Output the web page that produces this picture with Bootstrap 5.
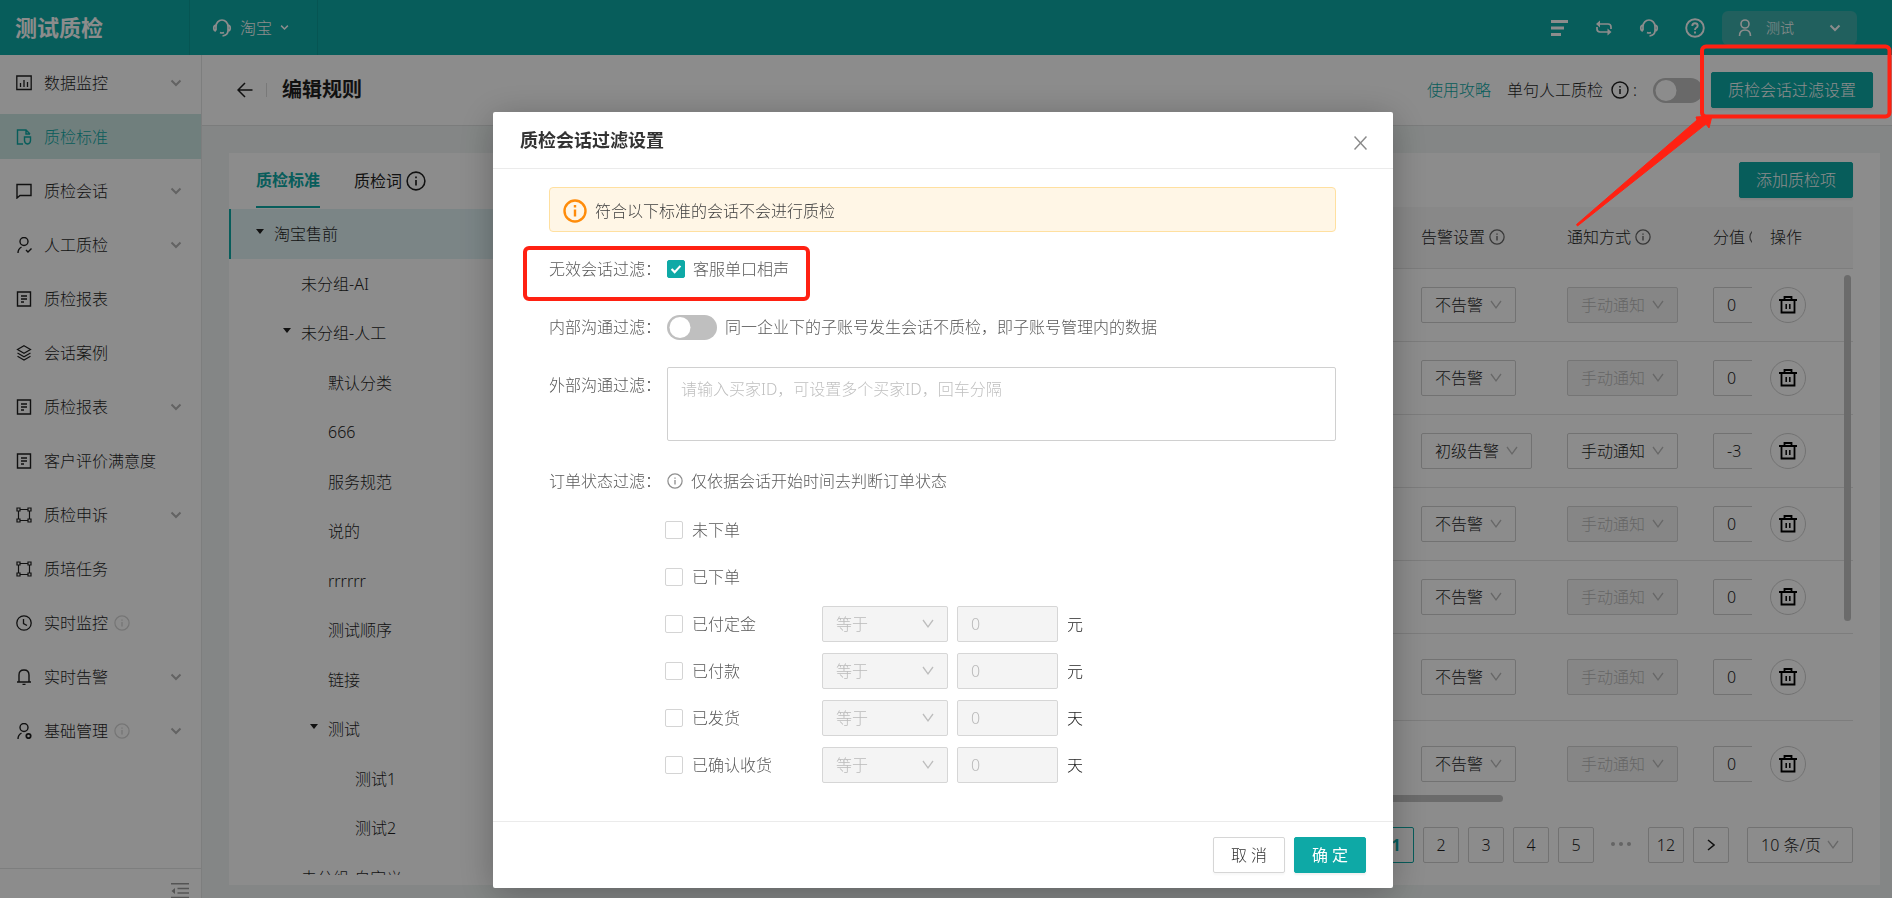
<!DOCTYPE html>
<html lang="zh-CN">
<head>
<meta charset="utf-8">
<meta name="viewport" content="width=device-width, initial-scale=1">
<title>测试质检</title>
<link rel="stylesheet" href="https://cdn.jsdelivr.net/npm/bootstrap@5.3.0/dist/css/bootstrap.min.css">
<style>
:root{--teal:#0ea9a6;--line:#e4e6e6;--ink:#1f1f1f;--chev:url("data:image/svg+xml,%3Csvg xmlns='http://www.w3.org/2000/svg' viewBox='0 0 12 10' fill='none' stroke='%23bdbdbd' stroke-width='1.3'%3E%3Cpath d='M1 1l5 7 5-7'/%3E%3C/svg%3E")}
body{font-family:"Noto Sans","Noto Sans CJK SC",sans-serif;font-size:16px;font-weight:300;line-height:24px;color:var(--ink);background:#f0f5f4}
svg{fill:none;stroke:currentColor;flex:none;display:block}
a{text-decoration:none;color:inherit}
.i16{width:16px;height:16px}.i18{width:18px;height:18px}.i20{width:20px;height:20px}.i24{width:24px;height:24px}
.text-teal{color:var(--teal)}

.topbar{height:55px;background:var(--teal);color:#fff}
.brandcell{width:190px;padding-left:15px;border-right:1px solid #0b9b98;font-size:22px;font-weight:700;padding-bottom:2px}
.shopcell{width:128px;padding-left:22px;border-right:1px solid #0b9b98}
.tools{gap:26px;margin-right:17px}
.userbox{width:135px;height:34px;border-radius:6px;background:#3cb0ac;padding:0 16px;gap:14px;font-size:14px;margin-right:35px;color:#fff;border:0;font-weight:300}

.side{width:202px;border-right:1px solid var(--line)}
.side .nav{padding-top:5px}
.side .nav-link{height:45px;margin-bottom:9px;padding:0 19px 0 16px;gap:12px;color:var(--ink)}
.side .nav-link.active{background:#cde7e3;color:var(--teal)}
.side .tip{color:#d6d6d6;margin-left:-6px}
.side .arrow{color:#b4b4b4;margin-left:auto}
.sidefoot{height:30px;border-top:1px solid var(--line);padding:14px 12px 0 0;color:#999}

.pagehead{height:71px;border-bottom:1px solid #e0e2e2;padding:0 19px 0 35px}
.pagetitle{font-size:20px;font-weight:700;line-height:24px;padding-left:15px}
.headline{width:1px;height:14px;background:#dcdcdc;margin-left:13px}
.btn-teal{--bs-btn-bg:var(--teal);--bs-btn-border-color:var(--teal);--bs-btn-color:#fff;--bs-btn-hover-bg:#0c9794;--bs-btn-hover-color:#fff;box-shadow:0 2px 2px rgba(0,0,0,.06)}
.btn{height:36px;padding:0 16px;border-radius:2px;line-height:24px;font-weight:inherit}
.workarea{padding:27px 12px 13px 27px}
.tree{width:400px}
.tabrow{height:55px;padding-left:27px;gap:34px}
.tabrow a.on{color:var(--teal);font-weight:700;height:55px;border-bottom:2px solid var(--teal);line-height:54px}
.tabrow a{height:55px;line-height:54px}
.tabrow a.word{font-weight:400}
.tree li{height:50px;display:flex;align-items:center;padding-left:72px}
.tree li:nth-child(even){height:49px}
.tree li.sel{background:#e1f3f5;border-left:2px solid var(--teal);padding-left:25px}
.tree li.lv3{padding-left:99px}.tree li.lv4{padding-left:126px}
.tree li.open::before,.tree li.sel::before{content:"";border:4px solid transparent;border-top:5px solid #1f1f1f;border-bottom:0;margin:0 10px 6px 0}
.tree li.open{padding-left:54px}.tree li.lv3.open{padding-left:81px}
.treebox{margin-bottom:10px;padding-top:1px}

.rulepane{padding:9px 27px 22px 0}
.rules{table-layout:fixed;--bs-table-bg:transparent;margin:0;color:inherit}
.rules th,.rules td{padding:0 0 0 18px;height:73px;vertical-align:middle;white-space:nowrap;overflow:hidden;border-color:#e3e3e3}
.rules th{height:61px;font-weight:inherit;background:#f7f7f7}
.rules th svg{color:#666}
.rules tr.tall td{height:87px}
.rules .ops{position:relative;overflow:visible;background:#fff;box-shadow:-7px 0 8px -5px rgba(0,0,0,.16)}
.rules th.ops{background:#f7f7f7}
.rules .form-control{width:90px}
.form-select{width:95px;height:36px;padding:0 0 0 13px;border-radius:2px;border-color:#d0d0d0;background-image:var(--chev);background-size:12px 10px;background-position:right 13px center;font-weight:inherit;color:inherit;line-height:24px}
.form-select.wide{width:111px}
.form-control{height:36px;padding:0 13px;border-radius:2px;border-color:#d0d0d0;font-weight:inherit;color:inherit}
.form-select:disabled,.form-control:disabled{background-color:#f4f4f4;color:#bababa;border-color:#d6d6d6;opacity:1}
.trash{width:36px;height:36px;border:1px solid #d0d0d0;border-radius:50%;background:#fff;padding:0}
.vbar{width:7px;height:346px;border-radius:4px;background:#c4c4c4;top:68px;right:2px}
.hbar{height:7px;width:874px;border-radius:4px;background:#c4c4c4;margin-top:2px}
.scroller{margin-top:9px}
.pager{gap:9px;padding-top:25px}
.pager .page-link{width:36px;height:36px;padding:0;line-height:34px;border:1px solid #d0d0d0;border-radius:2px;text-align:center;color:inherit;background:none}
.pager .page-link.on{border-color:var(--teal);color:var(--teal);font-weight:700}
.pager .form-select{width:106px;margin-left:9px}

.modal-backdrop{--bs-backdrop-opacity:.45}
.modal{padding-right:6px}
.modal-dialog{max-width:900px;margin-top:112px}
.modal-content{border:0;border-radius:2px;box-shadow:0 6px 36px rgba(0,0,0,.28);color:#595959}
.modal-header{height:57px;padding:0 26px 0 27px;border-color:#ebebeb;border-radius:0}
.modal-title{font-size:18px;font-weight:700;color:#333}
.modal-header button{color:#8a8a8a;background:none;border:0;padding:0;margin-top:6px}
.modal-body{padding:18px 57px 33px 56px}
.modal-body .alert{height:45px;padding:2px 13px 0;gap:8px;background:#fff6e6;border-color:#ffe0a0;border-radius:4px;margin-bottom:19px;color:#404040}
.alert svg{color:#ff8c0a}
.frow{min-height:36px;margin-bottom:22px}
.frow .flabel{width:118px;line-height:36px;flex:none}
.frow .note{color:#8f8f8f}
.frow textarea.form-control{height:74px;padding:9px 13px;resize:none}
textarea::placeholder{color:#bfbfbf!important}
.form-check-input{width:18px;height:18px;margin:0;border-color:#d4d4d4;float:none;flex:none}
.form-check-input[type=checkbox]{border-radius:2px}
.form-check-input:checked{background-color:var(--teal);border-color:var(--teal);background-image:url("data:image/svg+xml,%3Csvg xmlns='http://www.w3.org/2000/svg' viewBox='0 0 18 18' fill='none' stroke='white' stroke-width='2.4'%3E%3Cpath d='M4 9l3.5 3.5L14 5.5'/%3E%3C/svg%3E")}
.form-check-input.toggle[type=checkbox]{width:50px;height:25px;border:0;border-radius:13px;background:#bfbfbf url("data:image/svg+xml,%3Csvg xmlns='http://www.w3.org/2000/svg' viewBox='0 0 50 25'%3E%3Ccircle cx='13' cy='12.5' r='10.5' fill='white'/%3E%3C/svg%3E") center/50px 25px no-repeat}
.states{margin-top:-15px}
.state{height:47px;padding-left:116px}
.state label{margin-left:9px;width:130px}
.state .form-select{width:126px}
.state .form-control{width:101px;margin:0 9px}
.state .unit{color:var(--ink)}
.modal-footer{padding:15px 27px;gap:9px;border-color:#ebebeb}
.modal-footer>*{margin:0}
.modal-footer .btn{width:72px;padding:0;font-size:16px}
.modal-footer .btn-teal{font-weight:400}
.btn-plain{--bs-btn-border-color:#d6d6d6;--bs-btn-color:#333;box-shadow:0 2px 2px rgba(0,0,0,.03)}
.callout{position:absolute;left:-26px;top:-5px;width:287px;height:55px;border:4px solid #ff2112;border-radius:6px;pointer-events:none}
.pointer{position:fixed;top:0;right:0;width:332px;height:240px;z-index:1100;pointer-events:none;color:#ff2112}
</style>
</head>
<body class="vh-100 overflow-hidden d-flex flex-column">
<svg class="d-none" stroke-linecap="square">
  <symbol id="info" viewBox="0 0 18 18"><circle cx="9" cy="9" r="8" stroke-width="1.4"/><path d="M9 8v5M9 5v1.500" stroke-width="1.5" stroke-linecap="butt"/></symbol>
  <symbol id="down" viewBox="0 0 12 12"><path d="M1.5 3.5L6 8l4.500-4.500" stroke-width="2"/></symbol>
  <symbol id="head" viewBox="0 0 20 20"><path d="M4 12.500V8.500a6 6.500 0 0 1 12 0v4c0 3-2 5-5.500 5.500M4 7C1 7.500 1 12.500 4 13M16 7c3 .5 3 5.500 0 6M8 14.500q2 1 4 0" stroke-width="1.700"/></symbol>
  <symbol id="report" viewBox="0 0 16 16"><path d="M1.500 1h13v14h-13zM5 5h6M5 8h6M5 11h3" stroke-width="1.400"/></symbol>
  <symbol id="nodes" viewBox="0 0 16 16"><path d="M1 1h3v3H1zM12 1h3v3h-3zM1 12h3v3H1zM12 12h3v3h-3zM4 2.500h8M4 13.500h8M2.500 4v8M13.500 4v8" stroke-width="1.200"/></symbol>
  <symbol id="trash" viewBox="0 0 18 18"><path d="M0 4h18M5.500 3.500V1h7v2.500M2.500 4.500v12h13v-12" stroke-width="1.800"/><path d="M7.200 8v5M10.800 8v5" stroke-width="1.500"/></symbol>
</svg>

<header class="topbar d-flex align-items-stretch flex-shrink-0">
  <div class="brandcell d-flex align-items-center">测试质检</div>
  <a href="#" class="shopcell d-flex align-items-center"><svg class="i20"><use href="#head"/></svg><span class="ms-2">淘宝</span><svg width="9" height="9" class="ms-2"><use href="#down"/></svg></a>
  <div class="tools d-flex align-items-center ms-auto">
    <a href="#" aria-label="列表"><svg class="i18" viewBox="0 0 18 18" stroke-width="3"><path d="M0 2.500h17M0 9h13M0 15.500h10"/></svg></a>
    <a href="#" aria-label="切换"><svg class="i18" viewBox="0 0 18 18" stroke-width="1.700"><path d="M3 5h10q3 0 3 3v2M14 13H5q-3 0-3-3V8"/><path d="M5 1.500v7L1 5zM12.500 9.500v7l4-3.500z" fill="currentColor" stroke="none"/></svg></a>
    <a href="#" aria-label="客服"><svg class="i20"><use href="#head"/></svg></a>
    <a href="#" aria-label="帮助"><svg class="i20" viewBox="0 0 20 20" stroke-width="1.900"><circle cx="10" cy="10" r="8.800"/><path d="M7.300 8q0-2.700 2.700-2.700T12.700 7.800Q12.700 9 11 10q-1 .6-1 2M10 13.500v2"/></svg></a>
  </div>
  <button type="button" class="userbox d-flex align-items-center align-self-center"><svg width="14" height="17" viewBox="0 0 14 17" stroke-width="1.600"><circle cx="7" cy="5" r="4"/><path d="M1.500 17q0-6 5.500-6t5.500 6"/></svg><span>测试</span><svg width="12" height="12" class="ms-auto"><use href="#down"/></svg></button>
</header>

<div class="d-flex flex-grow-1 overflow-hidden">
  <aside class="side bg-white d-flex flex-column flex-shrink-0">
    <nav class="nav flex-column flex-nowrap flex-grow-1">
      <a href="#" class="nav-link d-flex align-items-center"><svg class="i16" viewBox="0 0 16 16" stroke-width="1.300"><path d="M.8 1h14.400v13.500H.8zM4.500 8v4M8 5v7M11.500 7v5"/></svg>数据监控<svg width="12" height="12" class="arrow"><use href="#down"/></svg></a>
      <a href="#" class="nav-link active d-flex align-items-center"><svg class="i16" viewBox="0 0 16 16" stroke-width="1.400"><path d="M7 15H1.500V1H10l4 4M10 1v4h4M8.500 8h6v3.500q0 3-3 3.500-3-.5-3-3.500z"/></svg>质检标准</a>
      <a href="#" class="nav-link d-flex align-items-center"><svg class="i16" viewBox="0 0 16 16" stroke-width="1.400"><path d="M1 15V1.500h14v11H4z"/></svg>质检会话<svg width="12" height="12" class="arrow"><use href="#down"/></svg></a>
      <a href="#" class="nav-link d-flex align-items-center"><svg class="i16" viewBox="0 0 16 16" stroke-width="1.400"><circle cx="8" cy="4.500" r="4"/><path d="M2 16q0-4 3.500-6M10 13l2 2 3.500-3.500"/></svg>人工质检<svg width="12" height="12" class="arrow"><use href="#down"/></svg></a>
      <a href="#" class="nav-link d-flex align-items-center"><svg class="i16"><use href="#report"/></svg>质检报表</a>
      <a href="#" class="nav-link d-flex align-items-center"><svg class="i16" viewBox="0 0 16 16" stroke-width="1.200"><path d="M8 .8l6.500 3.700L8 8.200 1.500 4.500zM1.500 8L8 11.700 14.500 8M1.500 11.300L8 15l6.500-3.700"/></svg>会话案例</a>
      <a href="#" class="nav-link d-flex align-items-center"><svg class="i16"><use href="#report"/></svg>质检报表<svg width="12" height="12" class="arrow"><use href="#down"/></svg></a>
      <a href="#" class="nav-link d-flex align-items-center"><svg class="i16"><use href="#report"/></svg>客户评价满意度</a>
      <a href="#" class="nav-link d-flex align-items-center"><svg class="i16"><use href="#nodes"/></svg>质检申诉<svg width="12" height="12" class="arrow"><use href="#down"/></svg></a>
      <a href="#" class="nav-link d-flex align-items-center"><svg class="i16"><use href="#nodes"/></svg>质培任务</a>
      <a href="#" class="nav-link d-flex align-items-center"><svg class="i16" viewBox="0 0 16 16" stroke-width="1.300"><circle cx="8" cy="8" r="7.200"/><path d="M7.500 4v4.500l3.500 2"/></svg>实时监控<svg class="i16 tip"><use href="#info"/></svg></a>
      <a href="#" class="nav-link d-flex align-items-center"><svg class="i16" viewBox="0 0 16 16" stroke-width="1.400"><path d="M1 13h14M3 13V6q0-5 5-5t5 5v7M6.500 15.500h3"/></svg>实时告警<svg width="12" height="12" class="arrow"><use href="#down"/></svg></a>
      <a href="#" class="nav-link d-flex align-items-center"><svg class="i16" viewBox="0 0 16 16" stroke-width="1.400"><circle cx="8" cy="4.500" r="4"/><path d="M2 16q0-4 3.500-6"/><circle cx="12.500" cy="13" r="2.200" stroke-width="1.800"/></svg>基础管理<svg class="i16 tip"><use href="#info"/></svg><svg width="12" height="12" class="arrow"><use href="#down"/></svg></a>
    </nav>
    <div class="sidefoot d-flex justify-content-end flex-shrink-0"><svg width="18" height="16" viewBox="0 0 18 16" stroke-width="1.600"><path d="M0 .8h18M6.500 5.500H18M6.500 10H18M0 14.500h18"/><path d="M4 5v6L.5 8z" fill="currentColor" stroke="none"/></svg></div>
  </aside>

  <main class="flex-grow-1 d-flex flex-column overflow-hidden">
    <div class="pagehead bg-white d-flex align-items-center flex-shrink-0">
      <a href="#" aria-label="返回"><svg class="i16" viewBox="0 0 16 16" stroke-width="1.500"><path d="M15.500 8H1M8 1L1 8l7 7"/></svg></a>
      <span class="headline"></span>
      <h1 class="pagetitle mb-0">编辑规则</h1>
      <a href="#" class="text-teal ms-auto">使用攻略</a>
      <label for="manual" class="d-flex align-items-center ms-3">单句人工质检<svg class="i18 ms-2"><use href="#info"/></svg><span class="ms-1">:</span></label>
      <input type="checkbox" role="switch" id="manual" class="form-check-input toggle ms-3 me-2">
      <button type="button" class="btn btn-teal">质检会话过滤设置</button>
    </div>
    <div class="workarea flex-grow-1 d-flex overflow-hidden">
      <div class="bg-white flex-grow-1 d-flex overflow-hidden">
        <section class="tree d-flex flex-column flex-shrink-0">
          <div class="tabrow d-flex flex-shrink-0"><a href="#" class="on">质检标准</a><a href="#" class="word d-flex align-items-center">质检词<svg class="i20 ms-1"><use href="#info"/></svg></a></div>
          <div class="treebox flex-grow-1 overflow-hidden">
            <ul class="list-unstyled mb-0">
              <li class="sel">淘宝售前</li>
              <li>未分组-AI</li>
              <li class="open">未分组-人工</li>
              <li class="lv3">默认分类</li>
              <li class="lv3">666</li>
              <li class="lv3">服务规范</li>
              <li class="lv3">说的</li>
              <li class="lv3">rrrrrr</li>
              <li class="lv3">测试顺序</li>
              <li class="lv3">链接</li>
              <li class="lv3 open">测试</li>
              <li class="lv4">测试1</li>
              <li class="lv4">测试2</li>
              <li>未分组-自定义</li>
            </ul>
          </div>
        </section>
        <section class="rulepane flex-grow-1 d-flex flex-column overflow-hidden">
          <div class="text-end flex-shrink-0"><button type="button" class="btn btn-teal">添加质检项</button></div>
          <div class="scroller position-relative flex-grow-1 overflow-hidden">
            <table class="table rules">
              <colgroup><col><col style="width:146px"><col style="width:146px"><col style="width:57px"><col style="width:101px"></colgroup>
              <thead><tr><th></th><th><span class="d-flex align-items-center">告警设置<svg class="i16 ms-1"><use href="#info"/></svg></span></th><th><span class="d-flex align-items-center">通知方式<svg class="i16 ms-1"><use href="#info"/></svg></span></th><th><span class="d-flex align-items-center">分值<svg class="i16 ms-1"><use href="#info"/></svg></span></th><th class="ops">操作</th></tr></thead>
              <tbody>
                <tr><td></td><td><select class="form-select" aria-label="告警设置"><option>不告警</option></select></td><td><select class="form-select wide" aria-label="通知方式" disabled><option>手动通知</option></select></td><td><input class="form-control" aria-label="分值" value="0"></td><td class="ops"><button type="button" class="trash d-flex align-items-center justify-content-center" aria-label="删除"><svg class="i18"><use href="#trash"/></svg></button></td></tr>
                <tr><td></td><td><select class="form-select" aria-label="告警设置"><option>不告警</option></select></td><td><select class="form-select wide" aria-label="通知方式" disabled><option>手动通知</option></select></td><td><input class="form-control" aria-label="分值" value="0"></td><td class="ops"><button type="button" class="trash d-flex align-items-center justify-content-center" aria-label="删除"><svg class="i18"><use href="#trash"/></svg></button></td></tr>
                <tr><td></td><td><select class="form-select wide" aria-label="告警设置"><option>初级告警</option></select></td><td><select class="form-select wide" aria-label="通知方式"><option>手动通知</option></select></td><td><input class="form-control" aria-label="分值" value="-3"></td><td class="ops"><button type="button" class="trash d-flex align-items-center justify-content-center" aria-label="删除"><svg class="i18"><use href="#trash"/></svg></button></td></tr>
                <tr><td></td><td><select class="form-select" aria-label="告警设置"><option>不告警</option></select></td><td><select class="form-select wide" aria-label="通知方式" disabled><option>手动通知</option></select></td><td><input class="form-control" aria-label="分值" value="0"></td><td class="ops"><button type="button" class="trash d-flex align-items-center justify-content-center" aria-label="删除"><svg class="i18"><use href="#trash"/></svg></button></td></tr>
                <tr><td></td><td><select class="form-select" aria-label="告警设置"><option>不告警</option></select></td><td><select class="form-select wide" aria-label="通知方式" disabled><option>手动通知</option></select></td><td><input class="form-control" aria-label="分值" value="0"></td><td class="ops"><button type="button" class="trash d-flex align-items-center justify-content-center" aria-label="删除"><svg class="i18"><use href="#trash"/></svg></button></td></tr>
                <tr class="tall"><td></td><td><select class="form-select" aria-label="告警设置"><option>不告警</option></select></td><td><select class="form-select wide" aria-label="通知方式" disabled><option>手动通知</option></select></td><td><input class="form-control" aria-label="分值" value="0"></td><td class="ops"><button type="button" class="trash d-flex align-items-center justify-content-center" aria-label="删除"><svg class="i18"><use href="#trash"/></svg></button></td></tr>
                <tr class="tall"><td></td><td><select class="form-select" aria-label="告警设置"><option>不告警</option></select></td><td><select class="form-select wide" aria-label="通知方式" disabled><option>手动通知</option></select></td><td><input class="form-control" aria-label="分值" value="0"></td><td class="ops"><button type="button" class="trash d-flex align-items-center justify-content-center" aria-label="删除"><svg class="i18"><use href="#trash"/></svg></button></td></tr>
              </tbody>
            </table>
            <div class="vbar position-absolute"></div>
          </div>
          <div class="hbar flex-shrink-0"></div>
          <nav class="pager d-flex justify-content-end align-items-center flex-shrink-0" aria-label="分页">
            <a href="#" class="page-link on">1</a><a href="#" class="page-link">2</a><a href="#" class="page-link">3</a><a href="#" class="page-link">4</a><a href="#" class="page-link">5</a>
            <svg width="36" height="36" viewBox="0 0 36 36"><g fill="#b8b8b8" stroke="none"><circle cx="10" cy="17" r="2"/><circle cx="18" cy="17" r="2"/><circle cx="26" cy="17" r="2"/></g></svg>
            <a href="#" class="page-link">12</a>
            <a href="#" class="page-link d-flex align-items-center justify-content-center" aria-label="下一页"><svg width="8" height="12" viewBox="0 0 8 12" stroke-width="1.500"><path d="M1 1l6 5-6 5"/></svg></a>
            <select class="form-select" aria-label="每页条数"><option>10 条/页</option></select>
          </nav>
        </section>
      </div>
    </div>
  </main>
</div>

<div class="modal-backdrop show"></div>
<div class="modal d-block" role="dialog" aria-modal="true" aria-labelledby="dlgTitle">
  <div class="modal-dialog">
    <div class="modal-content">
      <div class="modal-header">
        <h2 class="modal-title" id="dlgTitle">质检会话过滤设置</h2>
        <button type="button" aria-label="关闭"><svg width="13" height="14" viewBox="0 0 13 14" stroke-width="1.500"><path d="M.5 .5l12 13M12.500 .5l-12 13"/></svg></button>
      </div>
      <form class="modal-body">
        <div class="alert d-flex align-items-center"><svg class="i24" viewBox="0 0 24 24"><circle cx="12" cy="12" r="10.500" stroke-width="2.400"/><path d="M12 10.500v7M12 6v2.400" stroke-width="2.400"/></svg>符合以下标准的会话不会进行质检</div>
        <div class="frow d-flex align-items-center position-relative">
          <span class="flabel">无效会话过滤：</span>
          <input type="checkbox" class="form-check-input" id="solo" checked><label for="solo" class="ms-2">客服单口相声</label>
          <span class="callout"></span>
        </div>
        <div class="frow d-flex align-items-center">
          <span class="flabel">内部沟通过滤：</span>
          <input type="checkbox" role="switch" class="form-check-input toggle" id="inner"><label for="inner" class="ms-2">同一企业下的子账号发生会话不质检，即子账号管理内的数据</label>
        </div>
        <div class="frow d-flex align-items-start">
          <label class="flabel" for="outer">外部沟通过滤：</label>
          <textarea class="form-control" id="outer" placeholder="请输入买家ID，可设置多个买家ID，回车分隔"></textarea>
        </div>
        <div class="frow d-flex align-items-center">
          <span class="flabel">订单状态过滤：</span>
          <svg class="i16 note"><use href="#info"/></svg><span class="ms-2">仅依据会话开始时间去判断订单状态</span>
        </div>
        <div class="states">
          <div class="state d-flex align-items-center"><input type="checkbox" class="form-check-input" id="s1"><label for="s1">未下单</label></div>
          <div class="state d-flex align-items-center"><input type="checkbox" class="form-check-input" id="s2"><label for="s2">已下单</label></div>
          <div class="state d-flex align-items-center"><input type="checkbox" class="form-check-input" id="s3"><label for="s3">已付定金</label><select class="form-select" aria-label="条件" disabled><option>等于</option></select><input class="form-control" aria-label="金额" value="0" disabled><span class="unit">元</span></div>
          <div class="state d-flex align-items-center"><input type="checkbox" class="form-check-input" id="s4"><label for="s4">已付款</label><select class="form-select" aria-label="条件" disabled><option>等于</option></select><input class="form-control" aria-label="金额" value="0" disabled><span class="unit">元</span></div>
          <div class="state d-flex align-items-center"><input type="checkbox" class="form-check-input" id="s5"><label for="s5">已发货</label><select class="form-select" aria-label="条件" disabled><option>等于</option></select><input class="form-control" aria-label="天数" value="0" disabled><span class="unit">天</span></div>
          <div class="state d-flex align-items-center"><input type="checkbox" class="form-check-input" id="s6"><label for="s6">已确认收货</label><select class="form-select" aria-label="条件" disabled><option>等于</option></select><input class="form-control" aria-label="天数" value="0" disabled><span class="unit">天</span></div>
        </div>
      </form>
      <div class="modal-footer">
        <button type="button" class="btn btn-plain">取 消</button>
        <button type="button" class="btn btn-teal">确 定</button>
      </div>
    </div>
  </div>
</div>

<svg class="pointer" viewBox="0 0 332 240"><rect x="142" y="46.500" width="187.500" height="70" rx="4" stroke-width="4"/><path d="M16.500 224.500L137 120l-1-3 16-1-3 12-3-4L17.500 226z" fill="currentColor" stroke="currentColor" stroke-width="1"/></svg>
<script src="https://cdn.jsdelivr.net/npm/bootstrap@5.3.0/dist/js/bootstrap.bundle.min.js"></script>
</body>
</html>
